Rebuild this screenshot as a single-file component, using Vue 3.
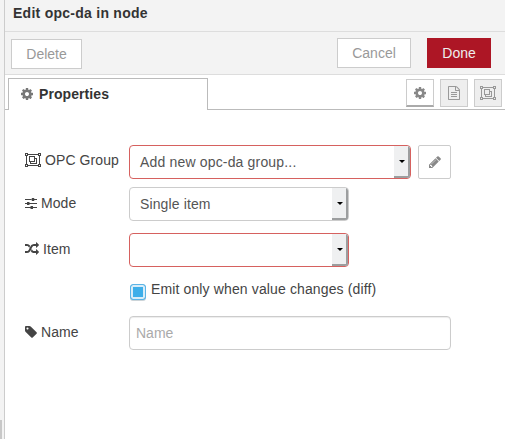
<script setup>
import { h, ref } from 'vue'

const paths = {
  cog: ['0 0 1536 1792', 'M1024 896q0-106-75-181t-181-75-181 75-75 181 75 181 181 75 181-75 75-181zm512-109v222q0 12-8 23t-20 13l-185 28q-19 54-39 91 35 50 107 138 10 12 10 25t-9 23q-27 37-99 108t-94 71q-12 0-26-9l-138-108q-44 23-91 38-16 136-29 186-7 28-36 28h-222q-14 0-24.5-8.5t-11.5-21.5l-28-184q-49-16-90-37l-141 107q-10 9-25 9-14 0-25-11-126-114-165-168-7-10-7-23 0-12 8-23 15-21 51-66.5t54-70.5q-27-50-41-99l-183-27q-13-2-21-12.5t-8-23.5v-222q0-12 8-23t19-13l186-28q14-46 39-92-40-57-107-138-10-12-10-24 0-10 9-23 26-36 98.5-107.5t94.5-71.5q13 0 26 10l138 107q44-23 91-38 16-136 29-186 7-28 36-28h222q14 0 24.5 8.5t11.5 21.5l28 184q49 16 90 37l142-107q9-9 24-9 13 0 25 10 129 119 165 170 7 8 7 22 0 12-8 23-15 21-51 66.5t-54 70.5q26 50 41 98l183 28q13 2 21 12.5t8 23.5z'],
  file: ['128 0 1536 1792', 'M1596 380q28 28 48 76t20 88v1152q0 40-28 68t-68 28h-1344q-40 0-68-28t-28-68v-1600q0-40 28-68t68-28h896q40 0 88 20t76 48zm-444-244v376h376q-10-29-22-41l-313-313q-12-12-41-22zm384 1528v-1024h-416q-40 0-68-28t-28-68v-416h-768v1536h1280zm-1024-864q0-14 9-23t23-9h704q14 0 23 9t9 23v64q0 14-9 23t-23 9h-704q-14 0-23-9t-9-23v-64zm736 224q14 0 23 9t9 23v64q0 14-9 23t-23 9h-704q-14 0-23-9t-9-23v-64q0-14 9-23t23-9h704zm0 256q14 0 23 9t9 23v64q0 14-9 23t-23 9h-704q-14 0-23-9t-9-23v-64q0-14 9-23t23-9h704z'],
  group: ['0 0 2048 1792', 'M0 0h384v128h1280v-128h384v384h-128v1024h128v384h-384v-128h-1280v128h-384v-384h128v-1024h-128zM128 128v128h128v-128zM1792 128v128h128v-128zM384 256v128h-128v1024h128v128h1280v-128h128v-1024h-128v-128zM128 1536v128h128v-128zM1792 1536v128h128v-128zM512 384h768v256h256v768h-896v-256h-128zM640 512v512h512v-512zM1280 768v384h-512v128h640v-512z'],
  sliders: ['0 -128 1536 1792', 'M0 256h832v128h-832zM1152 256h384v128h-384zM896 128h256q32 0 32 32v320q0 32-32 32h-256q-32 0-32-32v-320q0-32 32-32zM0 768h256v128h-256zM576 768h960v128h-960zM288 640h256q32 0 32 32v320q0 32-32 32h-256q-32 0-32-32v-320q0-32 32-32zM0 1280h704v128h-704zM1024 1280h512v128h-512zM736 1152h256q32 0 32 32v320q0 32-32 32h-256q-32 0-32-32v-320q0-32 32-32z'],
  random: ['0 0 1792 1792', 'M666 481q-60 92-137 273-22-45-37-72.5t-40.5-63.5-51-56.5-63-35-81.5-14.5h-224q-14 0-23-9t-9-23v-192q0-14 9-23t23-9h224q250 0 410 225zm1126 799q0 14-9 23l-320 320q-9 9-23 9-13 0-22.5-9.5t-9.5-22.5v-192q-32 0-85 .5t-81 1-73-1-71-5-64-10.5-63-18.5-58-28.5-59-40-55-53.5-56-69.5q59-93 136-273 22 45 37 72.5t40.5 63.5 51 56.5 63 35 81.5 14.5h256v-192q0-14 9-23t23-9q12 0 24 10l319 319q9 9 9 23zm0-896q0 14-9 23l-320 320q-9 9-23 9-13 0-22.5-9.5t-9.5-22.5v-192h-256q-48 0-87 15t-69 45-51 61.5-45 77.5q-32 62-78 171-29 66-49.5 111t-54 105-64 100-74 83-90 68.5-106.5 42-128 16.5h-224q-14 0-23-9t-9-23v-192q0-14 9-23t23-9h224q48 0 87-15t69-45 51-61.5 45-77.5q32-62 78-171 29-66 49.5-111t54-105 64-100 74-83 90-68.5 106.5-42 128-16.5h256v-192q0-14 9-23t23-9q12 0 24 10l319 319q9 9 9 23z'],
  tag: ['128 0 1536 1792', 'M576 448q0-53-37.5-90.5t-90.5-37.5-90.5 37.5-37.5 90.5 37.5 90.5 90.5 37.5 90.5-37.5 37.5-90.5zm1067 576q0 53-37 90l-491 492q-39 37-91 37-53 0-90-37l-715-716q-38-37-64.5-101t-26.5-117v-416q0-52 38-90t90-38h416q53 0 117 26.5t102 64.5l715 714q37 39 37 91z'],
  pencil: ['128 0 1536 1792', 'M491 1536l91-91-235-235-91 91v107h128v128h107zm523-928q0-22-22-22-10 0-17 7l-542 542q-7 7-7 17 0 22 22 22 10 0 17-7l542-542q7-7 7-17zm-54-192l416 416-832 832h-416v-416zm683 96q0 53-37 90l-166 166-416-416 166-165q36-38 90-38 53 0 91 38l235 234q37 39 37 91z'],
}

const Icon = ({ name }) => {
  const [viewBox, d] = paths[name]
  return h('svg', { viewBox, width: viewBox.split(' ')[2] / 128, height: 14, fill: 'currentColor', 'fill-rule': name === 'group' ? 'evenodd' : 'nonzero' }, [h('path', { d })])
}
Icon.props = ['name']

const name = ref('')
</script>

<template>
  <div class="editor">
    <div class="gutter"><div class="thumb"></div></div>
    <div class="tray">
      <header class="title">Edit opc-da in node</header>
      <div class="toolbar">
        <button class="btn delete">Delete</button>
        <button class="btn cancel">Cancel</button>
        <button class="btn done">Done</button>
      </div>
      <nav class="tabs">
        <div class="tab"><Icon name="cog" class="icon" /><span>Properties</span></div>
        <div class="tab-tools">
          <button class="tool active"><Icon name="cog" /></button>
          <button class="tool"><Icon name="file" /></button>
          <button class="tool"><Icon name="group" /></button>
        </div>
      </nav>
      <form class="form" @submit.prevent>
        <div class="row group-row">
          <label><Icon name="group" class="icon" /><span>OPC Group</span></label>
          <div class="select wide error"><span>Add new opc-da group...</span><i class="drop"></i></div>
          <button class="edit"><Icon name="pencil" /></button>
        </div>
        <div class="row mode-row">
          <label><Icon name="sliders" class="icon" /><span>Mode</span></label>
          <div class="select"><span>Single item</span><i class="drop"></i></div>
        </div>
        <div class="row item-row">
          <label><Icon name="random" class="icon" /><span>Item</span></label>
          <div class="select error"><span></span><i class="drop"></i></div>
        </div>
        <div class="check-row"><i class="check"></i><span>Emit only when value changes (diff)</span></div>
        <div class="row name-row">
          <label><Icon name="tag" class="icon" /><span>Name</span></label>
          <input v-model="name" type="text" placeholder="Name" />
        </div>
      </form>
    </div>
  </div>
</template>

<style>
body { overflow: hidden; background: #fff; }
</style>

<style scoped>
* { box-sizing: border-box; }
.editor { display: flex; width: 505px; height: 439px; font: 14px/20px "Liberation Sans", Arial, sans-serif; color: #444; }
button, input { font: inherit; margin: 0; }
svg { display: block; flex: none; }
.gutter { display: flex; align-items: flex-end; width: 4px; background: #f3f3f3; }
.thumb { width: 2px; height: 19px; background: #c8c8c8; }
.tray { flex: 1; display: flex; flex-direction: column; border-left: 1px solid #ccc; background: #fff; }
.title { height: 32px; padding: 3px 8px; background: #f3f3f3; border-bottom: 1px solid #ddd; font-weight: bold; letter-spacing: .26px; color: #333; }
.toolbar { display: flex; height: 43px; padding: 6px 14px 0 6px; background: #f3f3f3; border-bottom: 1px solid #ddd; }
.btn { height: 30px; padding: 0; border: 1px solid #ccc; background: #fff; color: #999; line-height: 28px; }
.delete { width: 71px; margin: 1px auto 0 0; }
.cancel { width: 74px; margin-right: 16px; }
.done { width: 64px; border-color: #ad1625; background: #ad1625; color: #eee; }
.tabs { display: flex; height: 35px; padding-top: 3px; }
.tabs::before { content: ""; width: 3px; border-bottom: 1px solid #bbb; }
.tab { display: flex; align-items: center; gap: 6px; width: 200px; padding: 0 12px 2px; border: solid #bbb; border-width: 1px 1px 0; font-weight: bold; letter-spacing: .08px; color: #333; }
.tab .icon { color: #777; }
.tab-tools { flex: 1; display: flex; justify-content: flex-end; gap: 6px; padding: 1px 3px 0 0; border-bottom: 1px solid #bbb; }
.tool { display: flex; align-items: center; justify-content: center; width: 28px; height: 28px; padding: 0; border: 1px solid #ccc; background: #eee; color: #999; }
.tool.active { background: #fff; color: #888; border-bottom: 2px solid #aaa; }
.form { display: flex; flex-direction: column; padding: 35px 0 0 20px; }
.row { display: flex; height: 34px; }
label { display: flex; align-items: center; gap: 4px; width: 104px; height: 32px; letter-spacing: .08px; }
.group-row label { height: 30px; }
.select { display: flex; justify-content: space-between; width: 220px; height: 34px; border: 1px solid #ccc; border-radius: 4px; background: #fff; color: #555; overflow: hidden; }
.select span { padding: 6px 10px; letter-spacing: .12px; }
.select.wide { width: 282px; }
.select.wide span { letter-spacing: .17px; }
.select.error { border-color: #d6615f; }
.drop { display: flex; align-items: center; justify-content: center; width: 16px; padding-left: 2px; background: #eff0f1; border-right: 2px solid #9c9e9f; border-bottom: 2px solid #9c9e9f; }
.drop::before { content: ""; border: solid transparent; border-width: 3px 3px 0; border-top-color: #000; }
.edit { display: flex; align-items: center; justify-content: center; width: 33px; height: 34px; margin-left: 7px; padding: 0; border: 1px solid #ccc; border-radius: 2px; background: #fff; color: #888; }
.mode-row { margin-top: 8px; }
.item-row { margin-top: 12px; }
.check-row { display: flex; gap: 5px; height: 20px; margin: 12px 0 0 105px; letter-spacing: .13px; }
.check { width: 16px; height: 16px; margin-top: 5px; border: 1px solid #5cb4e6; border-radius: 3px; background: #3daee9; box-shadow: inset 0 0 0 2px #d9edf8, 0 1px 0 #ccd4d8; }
.name-row { margin-top: 17px; }
input { width: 322px; height: 34px; padding: 0 6px; border: 1px solid #ccc; border-radius: 4px; background: #fff; box-shadow: inset 0 1px 1px rgba(0, 0, 0, .075); outline: 0; color: #555; }
input::placeholder { color: #aaa; opacity: 1; }
</style>
